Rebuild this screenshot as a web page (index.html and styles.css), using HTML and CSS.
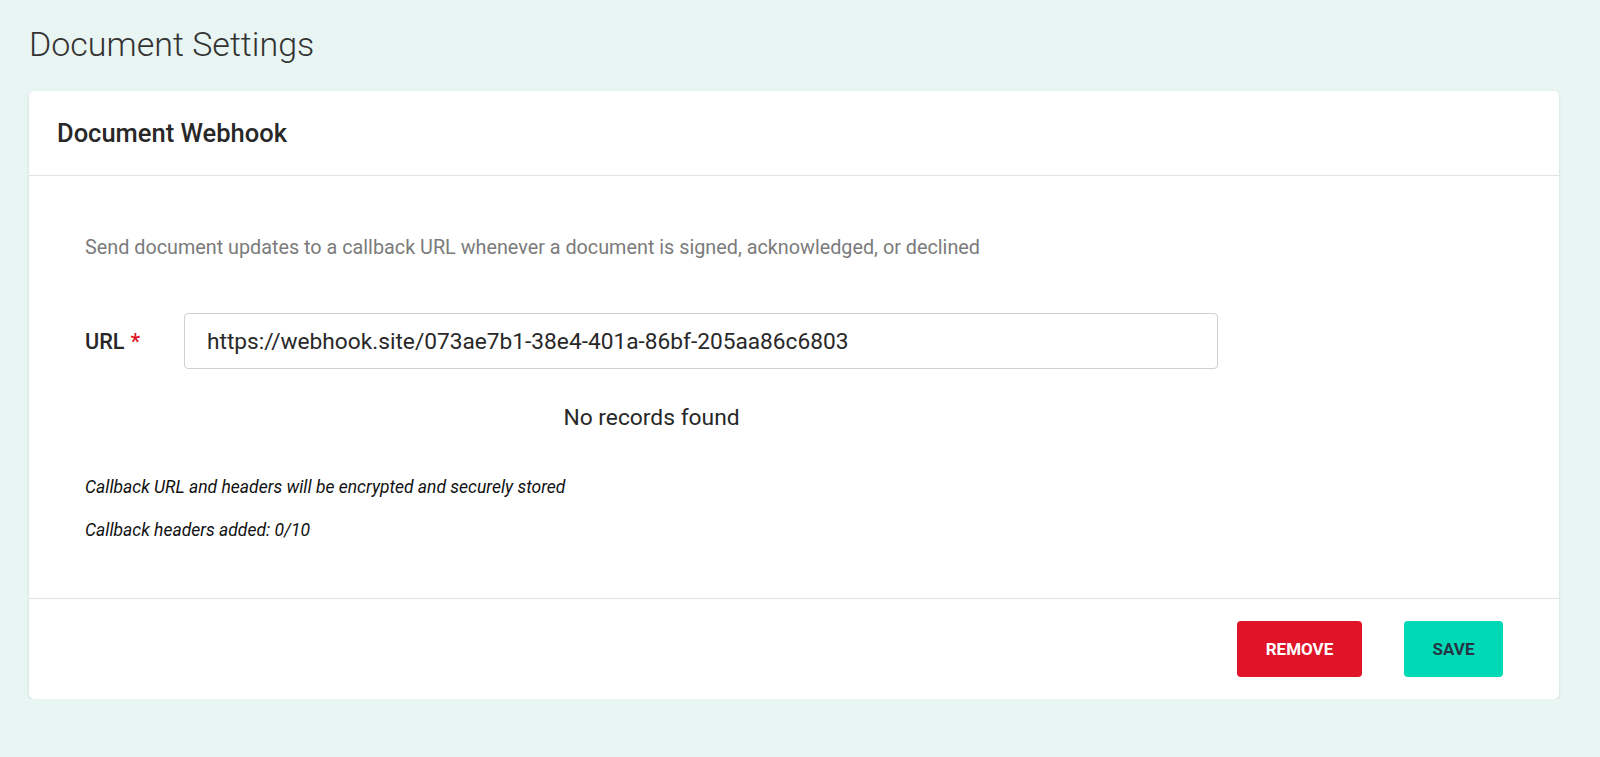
FILE: index.html
```html
<!DOCTYPE html>
<html lang="en">
<head>
    <meta charset="UTF-8">
    <meta name="viewport" content="width=device-width, initial-scale=1.0">
    <title>Document Settings</title>
    <link rel="stylesheet" href="styles.css">
</head>
<body>
    <div class="page">
        <h1 class="page-title">Document Settings</h1>
        <div class="card">
            <div class="card-header">
                <h2>Document Webhook</h2>
            </div>
            <div class="card-body">
                <div class="content">
                    <p class="description">Send document updates to a callback URL whenever a document is signed, acknowledged, or declined</p>
                    <div class="form-row">
                        <label for="url">URL<span class="required">*</span></label>
                        <input type="text" id="url" value="https://webhook.site/073ae7b1-38e4-401a-86bf-205aa86c6803">
                    </div>
                    <div class="empty">No records found</div>
                    <p class="note">Callback URL and headers will be encrypted and securely stored</p>
                    <p class="note">Callback headers added: 0/10</p>
                </div>
            </div>
            <div class="card-footer">
                <button class="btn btn-remove">Remove</button>
                <button class="btn btn-save">Save</button>
            </div>
        </div>
    </div>
</body>
</html>
```

FILE: styles.css
```css
body {
    font-family: Roboto, "Noto Sans", sans-serif;
    margin: 0;
    padding: 0;
    background-color: #e9f5f2;
    color: #222;
}

.page {
    padding: 0 41px 0 29px;
}

.page-title {
    margin: 0;
    padding-top: 23px;
    height: 91px;
    box-sizing: border-box;
    font-size: 34px;
    font-weight: 300;
    line-height: 42px;
    color: #333;
}

.card {
    background-color: #fff;
    border-radius: 5px;
    box-shadow: 0 1px 3px rgba(0, 0, 0, 0.12);
}

.card-header {
    height: 85px;
    padding: 0 28px;
    display: flex;
    align-items: center;
    border-bottom: 1px solid #e2e2e2;
    box-sizing: border-box;
}

.card-header h2 {
    margin: 0;
    font-size: 25.5px;
    font-weight: 500;
    color: #282828;
}

.card-body {
    padding: 58px 56px 0 56px;
    height: 423px;
    box-sizing: border-box;
    border-bottom: 1px solid #e2e2e2;
}

.content {
    width: 1133px;
}

.description {
    margin: 0;
    font-size: 19.8px;
    line-height: 27px;
    color: #7b7b7b;
}

.form-row {
    display: flex;
    align-items: center;
    margin-top: 52px;
}

.form-row label {
    width: 99px;
    flex-shrink: 0;
    font-size: 21.7px;
    font-weight: 500;
    color: #282828;
}

.required {
    color: #e01428;
    margin-left: 6px;
}

.form-row input {
    flex: 1;
    height: 56px;
    padding: 0 22px;
    border: 1px solid #cfcfd4;
    border-radius: 4px;
    box-sizing: border-box;
    font-family: Roboto, sans-serif;
    font-size: 22.7px;
    color: #282828;
}

.empty {
    text-align: center;
    font-size: 22.8px;
    line-height: 30px;
    margin-top: 34px;
    color: #282828;
}

.note {
    margin: 0;
    margin-top: 46px;
    font-size: 17.5px;
    font-style: italic;
    line-height: 16px;
    color: #111;
}

.note + .note {
    margin-top: 27px;
}

.card-footer {
    height: 100px;
    padding: 0 56px;
    display: flex;
    align-items: center;
    justify-content: flex-end;
    gap: 42px;
}

.btn {
    height: 56px;
    border: none;
    border-radius: 4px;
    font-family: Roboto, sans-serif;
    font-size: 17px;
    font-weight: 700;
    text-transform: uppercase;
    cursor: pointer;
}

.btn-remove {
    width: 125px;
    background-color: #e01428;
    color: #fff;
}

.btn-save {
    width: 99px;
    background-color: #00d9b5;
    color: #253545;
}
```
